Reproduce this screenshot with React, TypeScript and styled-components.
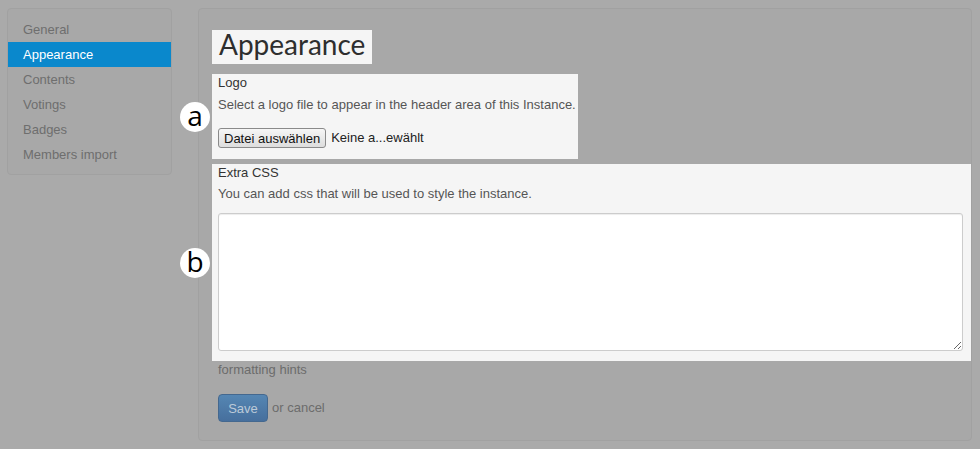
import React from "react";
import styled, { createGlobalStyle } from "styled-components";

const Global = createGlobalStyle`
  html, body { margin: 0; padding: 0; }
  body {
    background: #aaaaaa;
    font-family: "Liberation Sans", Arial, sans-serif;
    font-size: 13px;
    line-height: 18px;
    color: #333;
  }
  * { box-sizing: border-box; }
`;

const Page = styled.div`
  display: flex;
  align-items: flex-start;
  gap: 26px;
  padding: 8px 8px 8px 7px;
  width: 980px;
  height: 449px;
`;

const Sidebar = styled.nav`
  width: 165px;
  flex: none;
  background: #a8a8a8;
  border: 1px solid #a1a1a1;
  border-radius: 4px;
  padding: 8px 0 7px;
  display: flex;
  flex-direction: column;
`;

const NavItem = styled.div<{ $active?: boolean }>`
  height: 25px;
  line-height: 25px;
  padding-left: 15px;
  font-size: 13px;
  color: ${(p) => (p.$active ? "#ffffff" : "#6e6e6e")};
  background: ${(p) => (p.$active ? "#0a88cc" : "transparent")};
`;

const Main = styled.main`
  flex: 1;
  background: #a8a8a8;
  border: 1px solid #a1a1a1;
  border-radius: 4px;
  padding: 21px 0 18px 13px;
  display: flex;
  flex-direction: column;
  align-items: flex-start;
`;

const Highlight = styled.section`
  position: relative;
  background: #f5f5f5;
`;

const TitleBox = styled(Highlight)`
  padding: 0 7px 6px;
`;

const Title = styled.h1`
  margin: 0;
  font-family: Lato, "Open Sans", sans-serif;
  font-weight: 400;
  font-size: 28px;
  line-height: 28px;
  color: #2e2e2e;
`;

const FieldBox = styled(Highlight)<{ $wide?: boolean }>`
  margin-top: ${(p) => (p.$wide ? "5px" : "10px")};
  padding: ${(p) => (p.$wide ? "0 8px 10px 6px" : "0 6px 11px 6px")};
  align-self: ${(p) => (p.$wide ? "stretch" : "flex-start")};
  width: ${(p) => (p.$wide ? "auto" : "366px")};
`;

const Label = styled.div`
  color: #333;
  line-height: 18px;
`;

const Help = styled.div<{ $gap: number }>`
  margin-top: ${(p) => p.$gap}px;
  color: #555;
  line-height: 18px;
  white-space: nowrap;
`;

const FileRow = styled.div`
  margin-top: 14px;
  display: flex;
  align-items: center;
  gap: 5px;
`;

const FileButton = styled.button`
  height: 20px;
  padding: 0 5px;
  font-family: "Liberation Sans", Arial, sans-serif;
  font-size: 13px;
  color: #111;
  background: linear-gradient(#f6f6f6, #dddddd);
  border: 1px solid #8a8a8a;
  border-radius: 3px;
`;

const FileName = styled.span`
  color: #222;
`;

const TextArea = styled.textarea`
  display: block;
  margin-top: 10px;
  width: 100%;
  height: 138px;
  background: #fff;
  border: 1px solid #cccccc;
  border-radius: 3px;
  box-shadow: inset 0 1px 1px rgba(0, 0, 0, 0.075);
  resize: both;
  outline: none;
`;

const Marker = styled.span`
  position: absolute;
  left: -32px;
  top: 50%;
  transform: translateY(-50%);
  width: 30px;
  height: 30px;
  border-radius: 50%;
  background: #fff;
  display: flex;
  align-items: center;
  justify-content: center;
  font-family: "Open Sans", "Noto Sans", sans-serif;
  font-weight: 500;
  font-size: 28px;
  line-height: 1;
  color: #000;
  padding-bottom: 3px;
`;

const Hint = styled.div`
  margin-left: 6px;
  color: #6c6c6c;
  line-height: 18px;
`;

const Actions = styled.div`
  margin-top: 15px;
  margin-left: 6px;
  display: flex;
  align-items: center;
  gap: 4px;
`;

const SaveButton = styled.button`
  width: 50px;
  height: 28px;
  padding: 0;
  font-family: "Liberation Sans", Arial, sans-serif;
  font-size: 13px;
  color: #bccad8;
  background: linear-gradient(#5586b3, #466f9d);
  border: 1px solid #44688f;
  border-radius: 4px;
`;

const Cancel = styled.span`
  color: #6c6c6c;
`;

const navItems = ["General", "Appearance", "Contents", "Votings", "Badges", "Members import"];

export default function App() {
  return (
    <>
      <Global />
      <Page>
        <Sidebar>
          {navItems.map((n) => (
            <NavItem key={n} $active={n === "Appearance"}>
              {n}
            </NavItem>
          ))}
        </Sidebar>
        <Main>
          <TitleBox>
            <Title>Appearance</Title>
          </TitleBox>
          <FieldBox>
            <Marker>a</Marker>
            <Label>Logo</Label>
            <Help $gap={4}>Select a logo file to appear in the header area of this Instance.</Help>
            <FileRow>
              <FileButton>Datei auswählen</FileButton>
              <FileName>Keine a...ewählt</FileName>
            </FileRow>
          </FieldBox>
          <FieldBox $wide>
            <Marker>b</Marker>
            <Label>Extra CSS</Label>
            <Help $gap={3}>You can add css that will be used to style the instance.</Help>
            <TextArea />
          </FieldBox>
          <Hint>formatting hints</Hint>
          <Actions>
            <SaveButton>Save</SaveButton>
            <Cancel>or cancel</Cancel>
          </Actions>
        </Main>
      </Page>
    </>
  );
}
